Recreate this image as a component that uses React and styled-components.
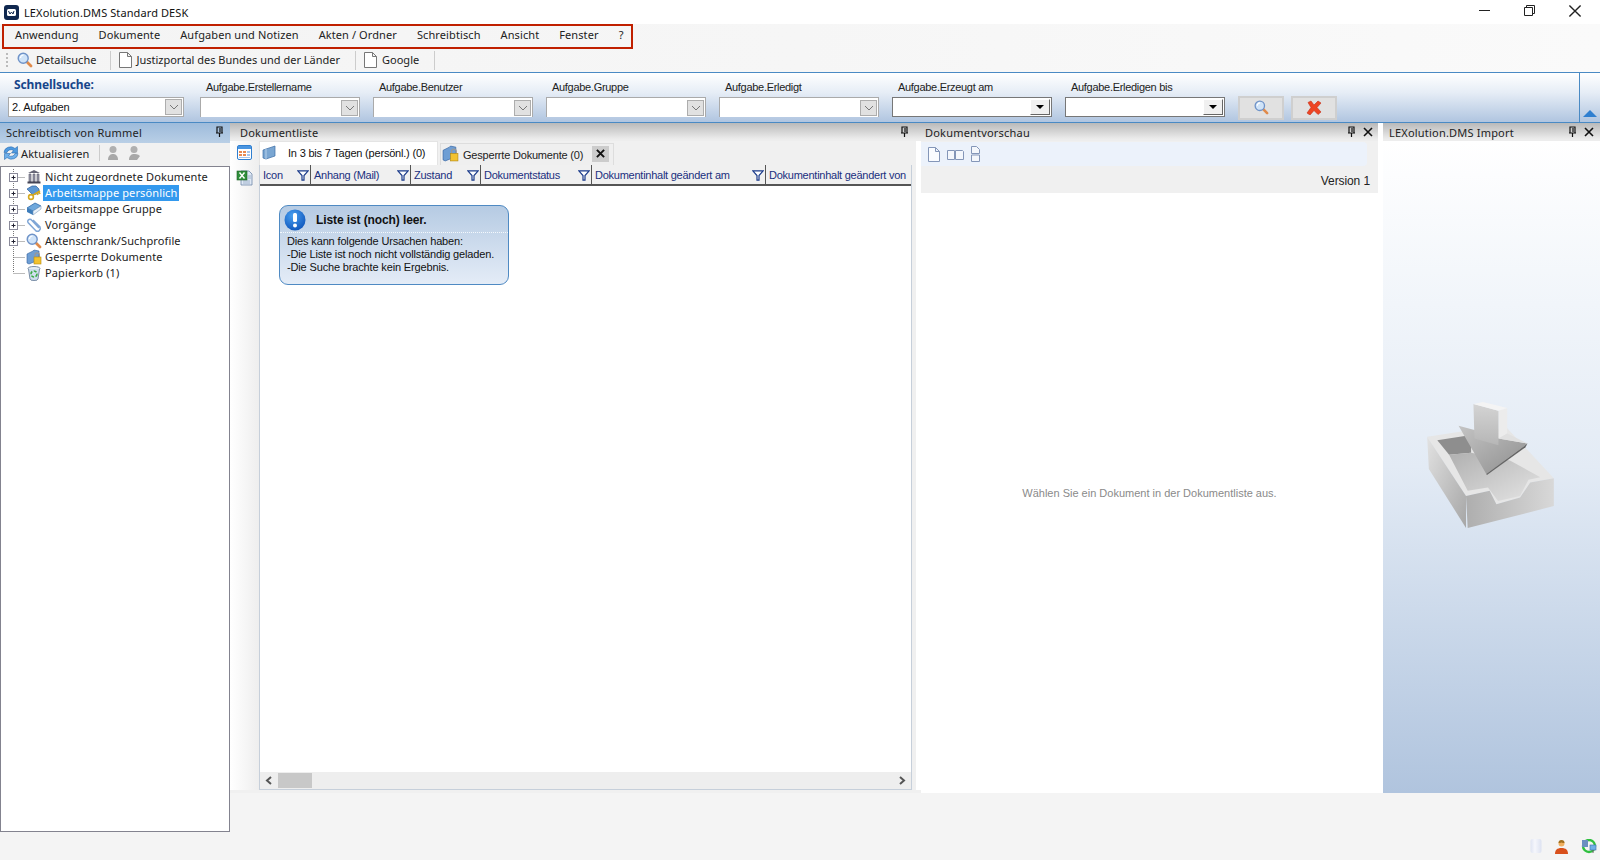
import React from "react";
import styled, { createGlobalStyle } from "styled-components";

const Global = createGlobalStyle`
  html, body { margin: 0; padding: 0; background: #f4f4f4; overflow: hidden; }
  body { font-family: "Noto Sans", "Liberation Sans", sans-serif; font-size: 11px; color: #111; }
  * { box-sizing: border-box; }
`;

const Page = styled.div`
  width: 1600px; height: 860px; display: flex; flex-direction: column; background: #f4f4f4;
`;
const TitleBar = styled.div`
  height: 24px; background: #fff; display: flex; align-items: center; padding: 0 3px 0 4px; flex: none;
`;
const TitleText = styled.span`
  margin-left: 5px; font-size: 11px; letter-spacing: .1px; color: #111; flex: 1;
`;
const WinButton = styled.div`
  width: 45px; height: 24px; display: flex; align-items: center; justify-content: center; padding-bottom: 3px;
`;
const MenuRow = styled.div`
  height: 25px; flex: none; background: linear-gradient(90deg, #f4f4f4, #f6f6f6 50%, #fafafa); padding-left: 2px;
`;
const MenuBox = styled.div`
  display: inline-flex; align-items: center; gap: 20px; height: 25px; width: 631px; border: 2px solid #c02000; padding: 0 0 5px 11px;
`;
const MenuItem = styled.span` font-size: 11px; color: #222; letter-spacing: .1px; white-space: nowrap; `;
const ToolRow = styled.div`
  height: 23px; flex: none; display: flex; align-items: center; padding: 0 0 1px 6px;
  background: linear-gradient(90deg, #f4f4f4, #f6f6f6 50%, #fafafa);
`;
const Grip = styled.div`
  width: 3px; height: 14px; border-left: 2px dotted #bbb; margin-right: 8px;
`;
const ToolItem = styled.div`
  display: flex; align-items: center; gap: ${p => p.$gap ?? 3}px; padding-right: ${p => p.$pr ?? 15}px;
  margin-right: ${p => p.$mr ?? 8}px; height: 19px; border-right: 1px solid #ccc; font-size: 11px; color: #222; white-space: nowrap;
`;
const ToolText = styled.span` position: relative; top: -1px; `;
const SearchPanel = styled.div`
  height: 51px; flex: none; display: flex; border-top: 1px solid #4a8ac4; border-bottom: 1px solid #4a8ac4;
  background: linear-gradient(180deg, #fff 0%, #e6edf6 40%, #b0c5e0 100%); padding-left: 8px; position: relative;
`;
const SearchCol = styled.div`
  width: ${p => p.$w}px; margin-right: ${p => p.$mr}px; display: flex; flex-direction: column;
`;
const SearchHead = styled.div`
  height: 24px; display: flex; align-items: center; font-weight: 700; color: #17468a; font-size: 12px; letter-spacing: -.1px; padding: 0 0 2px 6px; white-space: nowrap;
`;
const FieldLabel = styled.div`
  height: 24px; padding: 8px 0 0 6px; font-family: "Liberation Sans", sans-serif; font-size: 11px; letter-spacing: -.3px; color: #222; white-space: nowrap;
`;
const Combo = styled.div`
  height: 20px; background: #fff; display: flex; align-items: center; justify-content: space-between;
  font-family: "Liberation Sans", sans-serif; font-size: 11px; letter-spacing: -.1px; padding-left: 3px; padding-right: 1px;
  border: 1px solid ${p => p.$dark ? "#777" : "#aaa"}; ${p => p.$open ? "border-bottom: 0;" : ""}
`;
const ComboBtn = styled.div`
  width: 17px; height: 16px; background: #e1e1e1; border: 1px solid #adadad; display: flex; align-items: center; justify-content: center;
`;
const DateBtn = styled.div`
  width: 20px; height: 16px; background: #f0f0f0; border: 1px solid; border-color: #fff #666 #666 #fff; display: flex; align-items: center; justify-content: center;
`;
const Caret = styled.div`
  width: 0; height: 0; border-left: 4px solid transparent; border-right: 4px solid transparent; border-top: 4px solid #000;
`;
const ActionBtn = styled.div`
  width: 46px; height: 24px; margin-top: 23px; margin-right: 7px; background: #e1e1e1; border: 2px solid #cfcfcf; display: flex; align-items: center; justify-content: center; padding-bottom: 2px;
`;
const Collapse = styled.div`
  position: absolute; right: 0; top: 0; bottom: 0; width: 21px; border-left: 1px solid #4a8ac4; display: flex; align-items: flex-end; justify-content: center; padding-bottom: 5px;
`;
const Main = styled.div` display: flex; flex: none; height: 709px; `;
const LeftPanel = styled.div` width: 230px; display: flex; flex-direction: column; flex: none; `;
const BlueHead = styled.div`
  height: 20px; flex: none; display: flex; align-items: center; justify-content: space-between; padding: 0 6px 2px; font-size: 11px; color: #222;
  background: linear-gradient(180deg, #9dbbdb, #b9cfe6); letter-spacing: .25px;
`;
const LeftTools = styled.div`
  height: 23px; flex: none; display: flex; align-items: center; padding: 0 0 3px 3px; background: #f1f1f1; font-size: 11px; color: #222; letter-spacing: .1px;
`;
const ToolLabel = styled.span` margin-left: 2px; `;
const ToolSep = styled.div` width: 1px; height: 16px; background: #ccc; margin: 0 7px 0 10px; `;
const ToolSpacer = styled.span` width: 7px; `;
const Tree = styled.div`
  flex: 1; background: #fff; border: 1px solid #83838f; padding: 2px 0 0 2px;
`;
const TreeRow = styled.div`
  height: 16px; display: flex; align-items: center; font-size: 11px; color: #222; letter-spacing: .12px;
`;
const TreeLabel = styled.span`
  height: 16px; line-height: 15px; padding: 0 2px; margin-left: 1px; white-space: nowrap;
  background: ${p => p.$sel ? "#3399ee" : "transparent"}; color: ${p => p.$sel ? "#fff" : "#222"};
`;
const DocPanel = styled.div`
  width: 691px; height: 670px; flex: none; display: flex; flex-direction: column; background: #f0f0f0;
`;
const GrayHead = styled.div`
  height: 18px; flex: none; display: flex; align-items: center; justify-content: space-between; padding: 0 ${p => p.$right ?? 6}px 0 ${p => p.$left ?? 6}px; font-size: 11px; color: #222; letter-spacing: .2px;
  background: linear-gradient(180deg, #b9b9b9, #ededed 90%);
`;
const HeadIcons = styled.div` display: flex; align-items: center; gap: ${p => p.$gap ?? 7}px; `;
const DocBody = styled.div` flex: 1; display: flex; padding-bottom: 3px; `;
const SideStrip = styled.div`
  width: 29px; flex: none; display: flex; flex-direction: column; align-items: center; padding: 4px 0 0 0; gap: 9px; background: linear-gradient(90deg, #fff, #eee);
`;
const DocMain = styled.div` width: 653px; flex: none; display: flex; flex-direction: column; min-width: 0; `;
const PanelGap = styled.div` width: 9px; flex: none; border-right: 5px solid #fff; `;
const TabRow = styled.div` height: 24px; flex: none; display: flex; align-items: flex-end; `;
const TabActive = styled.div`
  width: 179px; height: 24px; background: #fff; display: flex; align-items: center; padding: 0 0 2px 2px; gap: 11px; white-space: nowrap;
  font-family: "Liberation Sans", sans-serif; font-size: 11px; letter-spacing: -.2px; border: 1px solid #e4e4e4; border-bottom: 0;
`;
const TabOther = styled.div`
  width: 174px; height: 22px; margin-left: 2px; display: flex; align-items: center; padding: 0 0 2px 1px;
  font-family: "Liberation Sans", sans-serif; font-size: 11px; letter-spacing: -.2px; color: #222; background: #efefef; border: 1px solid #ddd; border-bottom: 0;
`;
const TabClose = styled.div`
  width: 17px; height: 16px; background: #ccc; display: flex; align-items: center; justify-content: center; margin-left: 9px;
`;
const TabText = styled.span` margin-left: 4px; white-space: nowrap; position: relative; top: 1px; `;
const Grid = styled.div`
  flex: 1; background: #fff; display: flex; flex-direction: column; border: 1px solid #c6cfda; border-top: 0;
`;
const HeaderRow = styled.div`
  height: 21px; flex: none; display: flex; border-bottom: 2px solid #555; background: #f0f0f0;
`;
const HeaderCell = styled.div`
  width: ${p => p.$w}px; flex: none; display: flex; align-items: center; justify-content: space-between; padding: 1px 1px 0 3px; overflow: hidden;
  font-family: "Liberation Sans", sans-serif; font-size: 11px; letter-spacing: -.25px; color: #1a2f7e; white-space: nowrap;
  border-right: ${p => p.$last ? "0" : "1px solid #555"};
`;
const ListArea = styled.div` flex: 1; padding: 19px 0 0 19px; `;
const Bubble = styled.div`
  width: 230px; height: 80px; border-radius: 9px; border: 1px solid #4f8ac3; background: linear-gradient(180deg, #b6cbe3, #e4ecf7);
  display: flex; flex-direction: column;
`;
const BubbleHead = styled.div`
  height: 27px; display: flex; align-items: center; padding: 2px 0 0 4px; gap: 10px; flex: none; border-bottom: 1px dotted #f4f8fd;
`;
const BubbleTitle = styled.div` font-family: "Liberation Sans", sans-serif; font-weight: 700; font-size: 12px; letter-spacing: -.1px; color: #111; `;
const BubbleText = styled.div`
  font-family: "Liberation Sans", sans-serif; font-size: 11px; letter-spacing: -.15px; line-height: 13px; padding: 2px 0 0 7px; color: #111;
`;
const ScrollBar = styled.div`
  height: 17px; flex: none; background: #eee; display: flex; align-items: center; justify-content: space-between; padding: 0 5px;
`;
const Thumb = styled.div` flex: none; width: 34px; height: 15px; background: #c8c8c8; margin-left: 6px; `;
const ScrollTrack = styled.div` flex: 1; display: flex; `;
const PreviewPanel = styled.div`
  width: 462px; height: 670px; flex: none; display: flex; flex-direction: column; background: #f0f0f0; border-right: 5px solid #fff;
`;
const PreviewTools = styled.div`
  height: 24px; margin: 1px 11px 0 0; flex: none; display: flex; align-items: center; gap: 7px; padding-left: 7px; background: #ecf2fb; border-radius: 0 4px 4px 0;
`;
const VersionRow = styled.div`
  height: 27px; flex: none; display: flex; align-items: center; justify-content: flex-end; padding: 2px 8px 0 0; font-family: "Liberation Sans", sans-serif; font-size: 12px; color: #222; letter-spacing: -.1px;
`;
const PreviewBody = styled.div`
  flex: 1; background: #fff; display: flex; align-items: center; justify-content: center; font-family: "Liberation Sans", sans-serif; font-size: 11px; color: #8a8a8a; padding-bottom: 1px;
`;
const ImportPanel = styled.div` flex: 1; height: 670px; display: flex; flex-direction: column; `;
const ImportBody = styled.div`
  flex: 1; background: linear-gradient(180deg, #fff, #e3ebf5 50%, #b0c4de); display: flex; align-items: flex-start; justify-content: flex-end; padding: 261px 46px 0 0;
`;
const StatusIcons = styled.div` position: absolute; left: 1530px; top: 839px; display: flex; gap: 13px; `;

const Pin = () => (
  <svg width="9" height="12" viewBox="0 0 9 12"><path d="M2 1h5v6H2zM1 7h7M4.500 7v4M5 2v4" fill="none" stroke="#111" strokeWidth="1.200" /></svg>
);
const XIcon = ({ s = 10, w = 1.6, c = "#111" }) => (
  <svg width={s} height={s} viewBox="0 0 10 10"><path d="M1 1l8 8M9 1L1 9" stroke={c} strokeWidth={w} /></svg>
);
const Chevron = () => (
  <svg width="10" height="6" viewBox="0 0 10 6"><path d="M1 1l4 4 4-4" fill="none" stroke="#777" strokeWidth="1" /></svg>
);
const Lens = ({ s = 16 }) => (
  <svg width={s} height={s} viewBox="0 0 16 16">
    <path d="M9 9l5 5" stroke="#e08a4a" strokeWidth="2.800" strokeLinecap="round" />
    <circle cx="6.200" cy="6.200" r="5" fill="#cfe3f8" stroke="#6f93c8" strokeWidth="1.400" />
    <path d="M3.500 6a3 3 0 0 1 3-3" stroke="#fff" strokeWidth="1.200" fill="none" />
  </svg>
);
const Doc = () => (
  <svg width="13" height="16" viewBox="0 0 13 16"><path d="M.5.5h8l4 4v11H.5z M8.500.5v4h4" fill="#fff" stroke="#777" /></svg>
);
const Filter = () => (
  <svg width="12" height="11" viewBox="0 0 12 11"><path d="M.8.8h10.400L7 5.500v4.600H5V5.500z" fill="#fff" stroke="#1a3a8a" strokeWidth="1.200" /></svg>
);
const Guide = ({ expand, last }) => (
  <svg width="19" height="16" viewBox="0 0 19 16" style={{ flex: "none", marginLeft: "4px" }}>
    <path d={`M6.500 0V${last ? 8 : 16}M6.500 8.500H18`} stroke="#777" strokeDasharray="1 1" fill="none" />
    {expand && <>
      <rect x="2.500" y="4.500" width="8" height="8" fill="#fff" stroke="#8a8a9a" />
      <path d="M4.500 8.500h4M6.500 6.500v4" stroke="#223" />
    </>}
  </svg>
);
const S = 16;
const Bank = () => (
  <svg width={S} height={S} viewBox="0 0 16 16"><path d="M2 4l6-3 6 3z" fill="#667" /><path d="M3 5h2v8H3zM7 5h2v8H7zM11 5h2v8h-2z" fill="#99a" stroke="#556" strokeWidth=".6" /><path d="M1.500 13.500h13" stroke="#445" strokeWidth="2" /></svg>
);
const Keys = () => (
  <svg width={S} height={S} viewBox="0 0 16 16"><path d="M1 4l5-3h4l3 3v4l-6 2z" fill="#5d97d2" stroke="#2c5f9e" strokeWidth=".7" /><circle cx="5" cy="12" r="2.400" fill="none" stroke="#d6a91f" strokeWidth="1.600" /><path d="M7 10l7-4M11 8l1 2M13 7l1 2" stroke="#d6a91f" strokeWidth="1.600" /></svg>
);
const Book = () => (
  <svg width={S} height={S} viewBox="0 0 16 16"><path d="M1 7l8-5 6 3-8 5z" fill="#6fa8dc" stroke="#2f6aa8" strokeWidth=".8" /><path d="M1 7l6 3v4L1 11z" fill="#3d7dbb" /><path d="M7 10l8-5v3l-8 6z" fill="#eaf2fa" stroke="#7b9cc0" strokeWidth=".6" /></svg>
);
const Clip = () => (
  <svg width={S} height={S} viewBox="0 0 16 16"><path d="M13 12L5 3.500a2.200 2.200 0 0 0-3 3l8 8.500a3 3 0 0 0 4-4L7 4" transform="translate(0 -1)" fill="none" stroke="#7fa6d6" strokeWidth="1.500" /></svg>
);
const FolderLock = ({ s = S }) => (
  <svg width={s} height={s} viewBox="0 0 16 16"><path d="M1 5l6-3 1-1 5 1v9l-10 4-2-1z" fill="#6e9ed4" stroke="#2f5f9e" strokeWidth=".6" /><path d="M9 8V6a2.200 2.200 0 0 1 4.400 0v2" fill="none" stroke="#999" strokeWidth="1.200" /><rect x="8" y="8" width="7" height="7" fill="#f2c230" stroke="#b58a10" strokeWidth=".6" /></svg>
);
const Bin = () => (
  <svg width={S} height={S} viewBox="0 0 16 16"><ellipse cx="8" cy="3.500" rx="6" ry="2" fill="#e6eef6" stroke="#7a8ea6" /><path d="M2.500 4l1.500 10a4 1.500 0 0 0 8 0L13.500 4" fill="#cfdfee" stroke="#7a8ea6" /><circle cx="8" cy="9" r="3" fill="none" stroke="#3aaa45" strokeWidth="1.600" strokeDasharray="3 1.500" /></svg>
);
const Refresh = () => (
  <svg width="16" height="16" viewBox="0 0 16 16"><path d="M1 7.500A6.500 6 0 0 1 12 3.500L14.500 1.500V8H8.500L10.500 5.500A4 3.500 0 0 0 4 7.500z" fill="#4f9ae0" stroke="#2a6cb0" strokeWidth=".6" /><path d="M15 8.500A6.500 6 0 0 1 4 12.500L1.500 14.500V8.500H7.500L5.500 10.500A4 3.500 0 0 0 12 8.500z" fill="#6fb0ea" stroke="#2a6cb0" strokeWidth=".6" /></svg>
);
const GrayUser = ({ cut }) => (
  <svg width="14" height="16" viewBox="0 0 14 16"><circle cx="6" cy="4.500" r="3.500" fill="#b0b0b0" /><path d={cut ? "M1 15c0-5 3-6 5-6 1 0 4 0 6 2l-3 4z" : "M1 15c0-5 3-6 5-6s5 1 5 6z"} fill="#a8a8a8" /></svg>
);
const Calendar = () => (
  <svg width="15" height="15" viewBox="0 0 15 15"><rect x=".5" y=".5" width="14" height="14" rx="1.500" fill="#fff" stroke="#2f7fd0" /><rect x="1" y="1" width="13" height="3" fill="#4a95e0" /><path d="M2 6h3v2H2zM6 6h3v2H6zM2 9h3v2H2zM6 9h3v2H6z" fill="#e98a50" /><path d="M10 6h3v2h-3zM10 9h3v2h-3zM2 12h11v1H2z" fill="#a8c6ea" /></svg>
);
const Excel = () => (
  <svg width="17" height="17" viewBox="0 0 17 17"><path d="M5 2h8l3 3v11H5z" fill="#dfe8f4" stroke="#6f88aa" strokeWidth=".8" /><path d="M7 12h7M7 14h7M12 7h3M12 9h3" stroke="#8fa6c4" strokeWidth=".8" /><rect x="1" y="2" width="10" height="9" fill="#2f8f3a" stroke="#1c5f25" strokeWidth=".6" /><path d="M3.500 3.500l5 6M8.500 3.500l-5 6" stroke="#fff" strokeWidth="1.400" /></svg>
);
const TabFolder = () => (
  <svg width="15" height="15" viewBox="0 0 15 15"><path d="M1 5l3-1 9-3v10l-9 3-3-1z" fill="#7aa6d2" stroke="#3d6ea6" strokeWidth=".7" /><path d="M4 4v10" stroke="#b8d2ec" /></svg>
);
const InfoBadge = () => (
  <svg width="22" height="22" viewBox="0 0 22 22"><defs><radialGradient id="ib" cx=".4" cy=".3" r=".8"><stop offset="0" stopColor="#4aa0f0" /><stop offset="1" stopColor="#0a50b8" /></radialGradient></defs><circle cx="11" cy="11" r="10.500" fill="url(#ib)" /><rect x="9" y="4" width="4" height="9" rx="1.500" fill="#fff" /><circle cx="11" cy="16.500" r="2" fill="#fff" /></svg>
);
const RedX = () => (
  <svg width="16" height="15" viewBox="0 0 16 15"><path d="M2 2.500L5 1l3 4 4-4 3 2-4 4.500L15 12l-3 2.500-4-4-4 4.500L1 13l4-5.500z" fill="#ee4422" stroke="#c4301a" strokeWidth=".6" /></svg>
);
const PageOne = () => (
  <svg width="12" height="15" viewBox="0 0 12 15"><path d="M.5.5h7l4 4v10H.5z M7.500.5v4h4" fill="#fafcff" stroke="#8496b8" /></svg>
);
const PageTwo = () => (
  <svg width="17" height="11" viewBox="0 0 17 11"><path d="M.5 1.500h7v9h-7zM8.500 1.500h7l1 1v8h-8z" fill="#f4f7fc" stroke="#8496b8" /></svg>
);
const PageStack = () => (
  <svg width="9" height="16" viewBox="0 0 9 16"><path d="M.5.5h5l3 3v4h-8zM.5 9h8v6.500h-8z" fill="#f4f7fc" stroke="#8496b8" /></svg>
);
const AppIcon = () => (
  <svg width="15" height="15" viewBox="0 0 15 15"><rect width="15" height="15" rx="3" fill="#10284f" /><rect x="3" y="4" width="9" height="7" rx="1.500" fill="#fff" /><path d="M4.500 6l1.500 3 1.500-2 1.500 2 1-3" stroke="#10284f" fill="none" /></svg>
);
const Tray = () => (
  <svg width="127" height="126" viewBox="85 42 375 373">
    <defs>
      <linearGradient id="tf" x1="0" y1="0" x2="1" y2="1"><stop offset="0" stopColor="#e2e2e2" /><stop offset="1" stopColor="#a6a6a6" /></linearGradient>
      <linearGradient id="tr" x1="0" y1="0" x2="1" y2="0"><stop offset="0" stopColor="#aeaeae" /><stop offset="1" stopColor="#d8d8d8" /></linearGradient>
      <linearGradient id="fl" x1="0" y1="0" x2="1" y2="1"><stop offset="0" stopColor="#b0b0b0" /><stop offset="1" stopColor="#e4e4e4" /></linearGradient>
      <linearGradient id="ar" x1="0" y1="0" x2="1" y2="1"><stop offset="0" stopColor="#c4c4c4" /><stop offset="1" stopColor="#8e8e8e" /></linearGradient>
      <linearGradient id="sh" x1="0" y1="0" x2="0" y2="1"><stop offset="0" stopColor="#d4d4d4" /><stop offset="1" stopColor="#b6b6b6" /></linearGradient>
    </defs>
    <path d="M85 145L215 125 322 120 460 268 390 280 360 325 290 345 270 305 200 320z" fill="#e6e6e6" />
    <path d="M85 145L200 320V415L90 240z" fill="url(#tf)" />
    <path d="M200 320L270 305 290 345 360 325 390 280 460 268V350L205 415z" fill="url(#tr)" />
    <path d="M115 155L215 140V192L150 198z" fill="#8e8e8e" />
    <path d="M150 198L215 192 330 215 420 265 385 272 360 320 295 335 265 295 205 305z" fill="url(#fl)" />
    <path d="M296 68L322 60V135L296 150z" fill="#ececec" />
    <path d="M178 112L225 125 296 150 382 165 260 255z" fill="url(#ar)" />
    <path d="M222 48L296 68V170L225 150z" fill="url(#sh)" />
    <path d="M222 48L250 42 322 60 296 68z" fill="#f4f4f4" />
    <path d="M296 150L322 135 382 165z" fill="#e0e0e0" />
    <path d="M260 255L382 165 376 176 262 258z" fill="#666" />
  </svg>
);
const Cylinder = () => (
  <svg width="12" height="15" viewBox="0 0 12 15"><defs><linearGradient id="cy"><stop offset="0" stopColor="#dfe4f2" /><stop offset=".4" stopColor="#f6f7fc" /><stop offset="1" stopColor="#dde2f1" /></linearGradient></defs><rect width="11" height="14" x=".5" rx="2" fill="url(#cy)" /></svg>
);
const Person = () => (
  <svg width="13" height="15" viewBox="0 0 13 15"><path d="M0 15c0-4 2-6 6.500-6S13 11 13 15z" fill="#d8501c" /><circle cx="6.500" cy="4.500" r="3" fill="#f0b060" /><path d="M3.500 4a3 3 0 0 1 6 0H8a2 1 0 0 0-3 0z" fill="#a07020" /></svg>
);
const Net = () => (
  <svg width="16" height="15" viewBox="0 0 16 15"><circle cx="8" cy="7" r="6" fill="none" stroke="#30c040" strokeWidth="2.400" /><rect x="1" y="1" width="6" height="7" fill="#6a8fc0" /><rect x="9" y="6" width="6" height="5" fill="#70b0e8" stroke="#3a70a8" strokeWidth=".6" /><path d="M12 11v3" stroke="#666" /></svg>
);

const menu = ["Anwendung", "Dokumente", "Aufgaben und Notizen", "Akten / Ordner", "Schreibtisch", "Ansicht", "Fenster", "?"];
const fields = [
  ["Aufgabe.Erstellername"], ["Aufgabe.Benutzer"], ["Aufgabe.Gruppe"], ["Aufgabe.Erledigt"],
  ["Aufgabe.Erzeugt am", true], ["Aufgabe.Erledigen bis", true],
];
const tree = [
  ["Nicht zugeordnete Dokumente", Bank, true], ["Arbeitsmappe persönlich", Keys, true, true], ["Arbeitsmappe Gruppe", Book, true],
  ["Vorgänge", Clip, true], ["Aktenschrank/Suchprofile", Lens, true], ["Gesperrte Dokumente", FolderLock, false], ["Papierkorb (1)", Bin, false],
];
const columns = [["Icon", 51], ["Anhang (Mail)", 100], ["Zustand", 70], ["Dokumentstatus", 111], ["Dokumentinhalt geändert am", 174], ["Dokumentinhalt geändert von", 145]];

export default function App() {
  return (
    <Page>
      <Global />
      <TitleBar>
        <AppIcon />
        <TitleText>LEXolution.DMS Standard DESK</TitleText>
        <WinButton><svg width="11" height="2"><path d="M0 .5h11" stroke="#222" /></svg></WinButton>
        <WinButton><svg width="11" height="11"><path d="M.5 2.500h8v8h-8zM2.500 2.500v-2h8v8h-2" fill="none" stroke="#222" /></svg></WinButton>
        <WinButton><XIcon s={14} w={1} c="#222" /></WinButton>
      </TitleBar>
      <MenuRow>
        <MenuBox>{menu.map(m => <MenuItem key={m}>{m}</MenuItem>)}</MenuBox>
      </MenuRow>
      <ToolRow>
        <Grip />
        <ToolItem $pr={14}><Lens /><ToolText>Detailsuche</ToolText></ToolItem>
        <ToolItem $gap={4}><Doc /><ToolText>Justizportal des Bundes und der Länder</ToolText></ToolItem>
        <ToolItem $gap={5}><Doc /><ToolText>Google</ToolText></ToolItem>
      </ToolRow>
      <SearchPanel>
        <SearchCol $w={176} $mr={16}>
          <SearchHead>Schnellsuche:</SearchHead>
          <Combo>2. Aufgaben<ComboBtn><Chevron /></ComboBtn></Combo>
        </SearchCol>
        {fields.map(([label, date]) => (
          <SearchCol key={label} $w={160} $mr={13}>
            <FieldLabel>{label}</FieldLabel>
            {date
              ? <Combo $dark><span /><DateBtn><Caret /></DateBtn></Combo>
              : <Combo $open><span /><ComboBtn><Chevron /></ComboBtn></Combo>}
          </SearchCol>
        ))}
        <ActionBtn><Lens s={15} /></ActionBtn>
        <ActionBtn><RedX /></ActionBtn>
        <Collapse><svg width="14" height="7"><path d="M7 0l7 7H0z" fill="#2f7fd0" /></svg></Collapse>
      </SearchPanel>
      <Main>
        <LeftPanel>
          <BlueHead>Schreibtisch von Rummel<Pin /></BlueHead>
          <LeftTools>
            <Refresh /><ToolLabel>Aktualisieren</ToolLabel>
            <ToolSep /><GrayUser /><ToolSpacer /><GrayUser cut />
          </LeftTools>
          <Tree>
            {tree.map(([label, Icon, exp, sel], i) => (
              <TreeRow key={label}>
                <Guide expand={exp} last={i === tree.length - 1} />
                <Icon />
                <TreeLabel $sel={sel}>{label}</TreeLabel>
              </TreeRow>
            ))}
          </Tree>
        </LeftPanel>
        <DocPanel>
          <GrayHead $left={10} $right={12}>Dokumentliste<Pin /></GrayHead>
          <DocBody>
            <SideStrip><Calendar /><Excel /></SideStrip>
            <DocMain>
              <TabRow>
                <TabActive><TabFolder /><span>In 3 bis 7 Tagen (persönl.) (0)</span></TabActive>
                <TabOther><FolderLock s={17} /><TabText>Gesperrte Dokumente (0)</TabText><TabClose><XIcon s={9} w={2.200} /></TabClose></TabOther>
              </TabRow>
              <Grid>
                <HeaderRow>
                  {columns.map(([c, w], i) => (
                    <HeaderCell key={c} $w={w} $last={i === columns.length - 1}>
                      {c}{i < columns.length - 1 && <Filter />}
                    </HeaderCell>
                  ))}
                </HeaderRow>
                <ListArea>
                  <Bubble>
                    <BubbleHead><InfoBadge /><BubbleTitle>Liste ist (noch) leer.</BubbleTitle></BubbleHead>
                    <BubbleText>Dies kann folgende Ursachen haben:<br />-Die Liste ist noch nicht vollständig geladen.<br />-Die Suche brachte kein Ergebnis.</BubbleText>
                  </Bubble>
                </ListArea>
                <ScrollBar>
                  <svg width="7" height="9"><path d="M6 1L2 4.500 6 8" fill="none" stroke="#555" strokeWidth="2" /></svg>
                  <ScrollTrack><Thumb /></ScrollTrack>
                  <svg width="7" height="9"><path d="M1 1l4 3.500L1 8" fill="none" stroke="#555" strokeWidth="2" /></svg>
                </ScrollBar>
              </Grid>
            </DocMain>
            <PanelGap />
          </DocBody>
        </DocPanel>
        <PreviewPanel>
          <GrayHead $left={4} $right={5}>Dokumentvorschau<HeadIcons><Pin /><XIcon /></HeadIcons></GrayHead>
          <PreviewTools><PageOne /><PageTwo /><PageStack /></PreviewTools>
          <VersionRow>Version 1</VersionRow>
          <PreviewBody>Wählen Sie ein Dokument in der Dokumentliste aus.</PreviewBody>
        </PreviewPanel>
        <ImportPanel>
          <GrayHead>LEXolution.DMS Import<HeadIcons><Pin /><XIcon /></HeadIcons></GrayHead>
          <ImportBody><Tray /></ImportBody>
        </ImportPanel>
      </Main>
      <StatusIcons><Cylinder /><Person /><Net /></StatusIcons>
    </Page>
  );
}
